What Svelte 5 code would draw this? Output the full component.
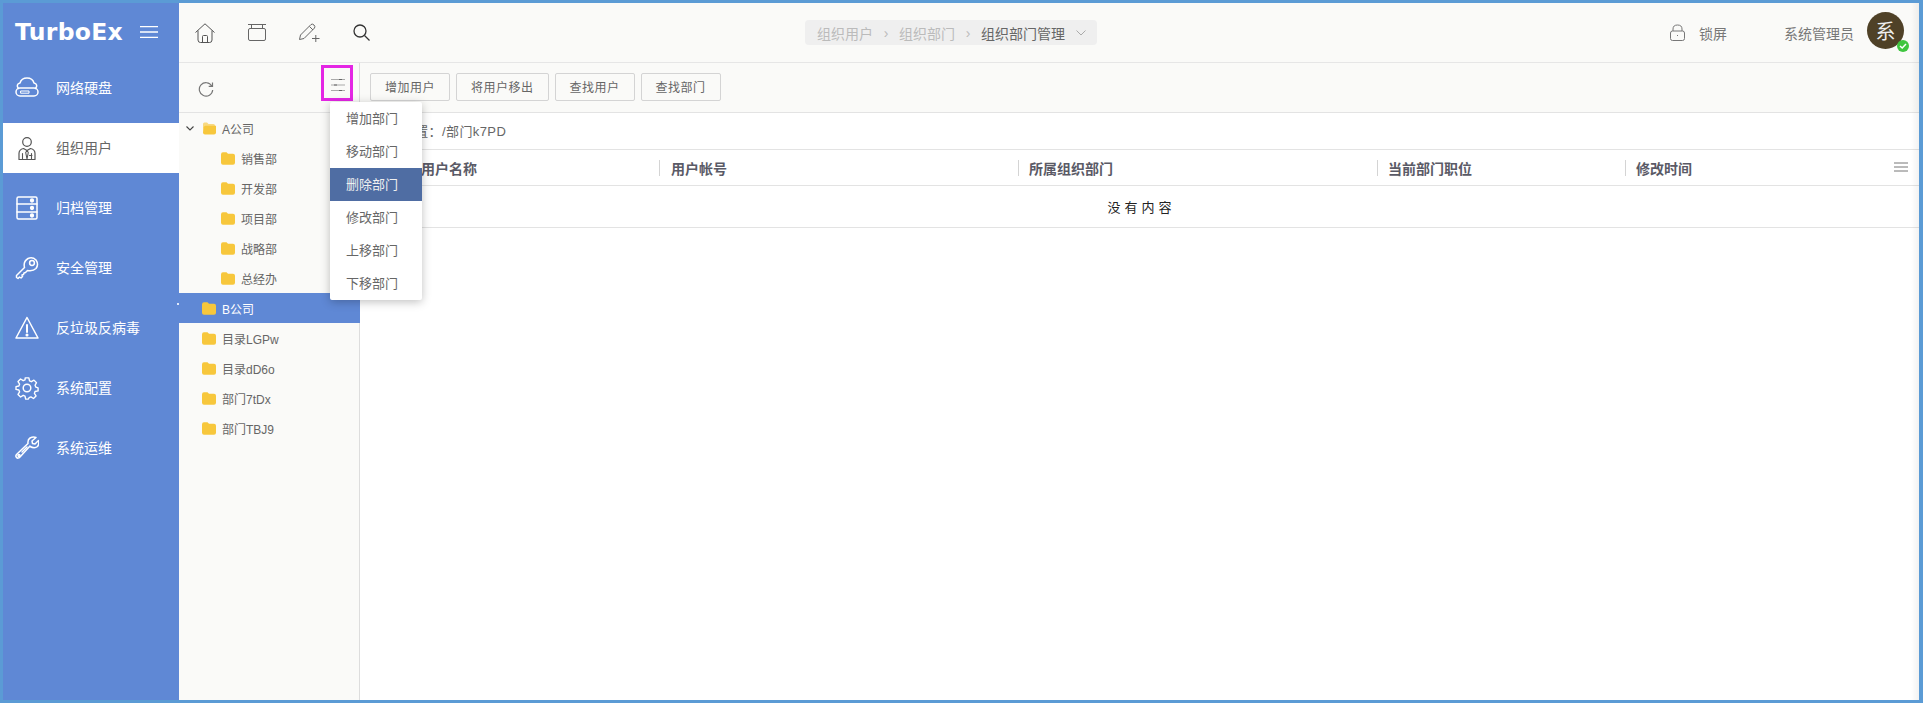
<script lang="ts">
  const nav = [
    { label: "网络硬盘", icon: "disk" },
    { label: "组织用户", icon: "user", active: true },
    { label: "归档管理", icon: "server" },
    { label: "安全管理", icon: "key" },
    { label: "反垃圾反病毒", icon: "warn" },
    { label: "系统配置", icon: "gear" },
    { label: "系统运维", icon: "wrench" }
  ];
  const subs = ["销售部", "开发部", "项目部", "战略部", "总经办"];
  const tops = [
    { label: "B公司", selected: true },
    { label: "目录LGPw" },
    { label: "目录dD6o" },
    { label: "部门7tDx" },
    { label: "部门TBJ9" }
  ];
  const actions = ["增加部门", "移动部门", "删除部门", "修改部门", "上移部门", "下移部门"];
  const buttons = ["增加用户", "将用户移出", "查找用户", "查找部门"];
  const columns = ["用户名称", "用户帐号", "所属组织部门", "当前部门职位", "修改时间"];
</script>

{#snippet folder(open = false)}
  <svg class="folder" viewBox="0 0 14 13" width="14" height="13">
    {#if open}
      <path d="M1 4V2Q1 .5 2.500 .5h2.500l1.500 1.500h5q1.500 0 1.500 1.500V4H4Q2 4 1.600 5.500L1 8z" fill="#f7cb4d" opacity=".7" />
      <path d="M1.400 5.500Q1.800 3.800 3.600 3.800H14V10.500q0 2-2 2H3q-2 0-2-2z" fill="#f7c73c" />
    {:else}
      <path d="M0 2.500Q0 .3 2 .3h3.500l1.500 1.500H12q2 0 2 2v7q0 2-2 2H2q-2 0-2-2z" fill="#f7c73c" />
    {/if}
  </svg>
{/snippet}

{#snippet navIcon(name: string)}
  <svg viewBox="0 0 24 24" width="24" height="24" fill="none" stroke="currentColor" stroke-width="1.500" stroke-linecap="round" stroke-linejoin="round">
    {#if name === "disk"}
      <path d="M3.500 12.500C1.500 10.500 2 7.500 5 7 6 3.500 9 2 12 2s6 1.500 7 5c3 .5 3.500 3.500 1.500 5.500" />
      <rect x="1" y="12" width="22" height="8" rx="4" />
      <rect x="6" y="15" width="8" height="2.200" stroke-width="1" />
    {:else if name === "user"}
      <circle cx="12" cy="6" r="4.300" stroke-width="1.200" />
      <path d="M4 23.500v-6q0-4 4.500-5l3.500 2 3.500-2q4.500 1 4.500 5v6z" stroke-width="1.200" />
      <path d="M12 14.500l-1.300 2 1.300 6.500 1.300-6.500zM7.500 17.500v6M16.500 17.500v6M14.500 19.500h2.500" stroke-width="1.100" />
    {:else if name === "server"}
      <rect x="2" y="1" width="20" height="22" rx="1.500" />
      <path d="M2 8h20M2 16h20" />
      <circle cx="17" cy="4.500" r="1.400" fill="currentColor" />
      <circle cx="17" cy="12" r="1.400" fill="currentColor" />
      <circle cx="17" cy="19.500" r="1.400" fill="currentColor" />
    {:else if name === "key"}
      <path d="M9.500 11.500L1.500 19.500v2l1.500 1 1.500-1.500 1.500 1 1.500-1.500-.5-1.500 1.500-.5.500-1.500 1.500-.5 2-2Q18 15.500 21 12.500 24 8.500 21 4 17.500.500 13 2.500 8 5.500 9.500 11.500z" />
      <circle cx="17" cy="7" r="2.400" />
    {:else if name === "warn"}
      <path d="M12 1.500L1 22h22z" />
      <path d="M12 9v7" stroke-width="2" />
      <circle cx="12" cy="19" r=".8" fill="currentColor" />
    {:else if name === "gear"}
      <path d="M10 1h4l.7 3.200 2 .9L19.500 3.400 22.300 6.200 20.700 9l.9 2 2.400.9v3.200l-3.300.7-.7 2 1.800 2.800-2.800 2.800-2.800-1.700-2 .8L13.500 24h-3L9.800 20.700l-2-.8L5 21.700 2.200 18.900 3.900 16.100l-.8-2L0 13.500v-3l3.100-.7.800-2L2.200 5 5 2.200 7.800 4l2-.9z" transform="translate(1 1) scale(.92)" />
      <circle cx="12" cy="12" r="3.800" />
    {:else}
      <path d="M15 10L5 21q-2 2-3.500.5T2 18L13 7.500Q12.500 3.500 15 2q3-1.500 6-.5l-4 3.500.5 2.500 2.500.5 3.500-3.500q1 3.500-1 6-3 2.500-7.500 0z" />
      <circle cx="4" cy="19.500" r="1" />
      <path d="M7 16l5-5" />
    {/if}
  </svg>
{/snippet}

<div class="frame">
  <aside class="sidebar">
    <div class="brand">
      <span class="logo">TurboEx</span>
      <svg viewBox="0 0 18 12" width="18" height="12" stroke="#fff" stroke-width="1.300"><path d="M0 .7h18M0 6h18M0 11.300h18" /></svg>
    </div>
    <nav>
      {#each nav as item}
        <div class="nav-item" class:active={item.active}>
          {@render navIcon(item.icon)}
          <span>{item.label}</span>
        </div>
      {/each}
    </nav>
  </aside>

  <div class="main">
    <header class="topbar">
      <div class="quick">
        <svg viewBox="0 0 20 20" width="20" height="20" fill="none" stroke="#555" stroke-width="1"><path d="M.5 9.500L10 .8l9.500 8.700M3 7.500V17q0 2.500 2.500 2.500h9Q17 19.500 17 17V7.500M7.500 19.500v-6q0-1 1-1h3q1 0 1 1v6" /></svg>
        <svg viewBox="0 0 18 17" width="18" height="17" fill="none" stroke="#666" stroke-width="1"><path d="M0 .5h18M3.500.5v4M14.500.5v4" /><rect x=".5" y="4.500" width="17" height="12" rx="1.500" /></svg>
        <svg viewBox="0 0 21 19" width="21" height="19" fill="none" stroke="#666" stroke-width="1"><path d="M.5 16.500l1-4.500L12 1.500q1.500-1 3 .5t.5 3L5 15.500zM10.500 3.500l3.500 3.500M13 15.500h7.500M16.800 12v7" /></svg>
        <svg viewBox="0 0 17 17" width="17" height="17" fill="none" stroke="#333" stroke-width="1.300"><circle cx="7" cy="7" r="6" /><path d="M11.500 11.500L16.500 16.500" /></svg>
      </div>
      <div class="crumbs">
        <span class="dim">组织用户</span><i>›</i><span class="dim">组织部门</span><i>›</i><span>组织部门管理</span>
        <svg viewBox="0 0 10 6" width="10" height="6" fill="none" stroke="#aaa"><path d="M.5.500L5 5 9.500.500" /></svg>
      </div>
      <div class="account">
        <svg viewBox="0 0 15 17" width="15" height="17" fill="none" stroke="#777"><path d="M3 7V5q0-4 4.500-4T12 5v2" /><rect x=".5" y="7" width="14" height="9.500" rx="2" /><path d="M7 11.500h1" /></svg>
        <span class="lock">锁屏</span>
        <span class="who">系统管理员</span>
        <div class="avatar">系
          <span class="badge"><svg viewBox="0 0 10 10" width="10" height="10" fill="none" stroke="#fff" stroke-width="1.500"><path d="M2 5l2.200 2L8 3" /></svg></span>
        </div>
      </div>
    </header>

    <div class="workspace">
      <section class="tree">
        <div class="tree-tools">
          <svg viewBox="0 0 16 16" width="16" height="16" fill="none" stroke="#777" stroke-width="1.200"><path d="M13.800 5A6.700 6.700 0 1 0 14.700 9M14.500 1.500V5.300H10.700" /></svg>
          <svg class="sliders" viewBox="0 0 14 12" width="14" height="12" fill="none" stroke="#aaa"><path d="M0 .5h14M0 6h14M0 11.500h14" /><path d="M8 .5h3M3 6h3M8 11.500h3" stroke="#666" /></svg>
        </div>
        <div class="tree-row top">
          <svg class="caret" viewBox="0 0 8 5" width="8" height="5" fill="none" stroke="#444" stroke-width="1.100"><path d="M.5.500L4 4 7.500.500" /></svg>
          {@render folder(true)}
          <span>A公司</span>
        </div>
        {#each subs as name}
          <div class="tree-row sub">{@render folder()}<span>{name}</span></div>
        {/each}
        {#each tops as t}
          <div class="tree-row top" class:selected={t.selected}>{@render folder()}<span>{t.label}</span></div>
        {/each}
      </section>

      <section class="content">
        <div class="toolbar">
          {#each buttons as b}<button>{b}</button>{/each}
        </div>
        <div class="path">当前位置：/部门k7PD</div>
        <div class="thead">
          {#each columns as c}<div class="th"><b>{c}</b></div>{/each}
          <svg viewBox="0 0 14 10" width="14" height="10" stroke="#777"><path d="M0 1h14M0 5h14M0 9h14" /></svg>
        </div>
        <div class="empty">没有内容</div>
      </section>
    </div>
    <div class="edge"></div>
  </div>

  <div class="highlight"></div>
  <ul class="menu">
    {#each actions as a, i}<li class:hot={i === 2}>{a}</li>{/each}
  </ul>
</div>

<style>
  :global(body) { background: #fff; }
  .frame {
    position: relative;
    box-sizing: border-box;
    width: 1923px; height: 703px;
    display: flex;
    border: solid #5b9bd5;
    border-width: 3px 4px 3px 3px;
    font-family: "Liberation Sans", "Noto Sans CJK SC", sans-serif;
    font-size: 13px;
    color: #555;
    overflow: hidden;
  }
  .sidebar { width: 176px; flex-shrink: 0; background: #5f88d5; color: #fff; }
  .brand { height: 60px; box-sizing: border-box; padding: 0 0 3px 12px; display: flex; align-items: center; gap: 17px; }
  .logo { font: 700 23.500px "DejaVu Sans", sans-serif; letter-spacing: .3px; }
  .nav-item { height: 50px; margin-bottom: 10px; display: flex; align-items: center; gap: 17px; padding-left: 12px; font-size: 14px; }
  .nav-item svg { margin-top: -1px; }
  .nav-item span { margin-top: -2px; }
  .nav-item.active { background: #fff; color: #666; }
  .nav-item.active svg { color: #555; }

  .main { flex: 1; display: flex; flex-direction: column; min-width: 0; position: relative; }
  .edge { position: absolute; right: 0; top: 0; bottom: 0; width: 8px; background: linear-gradient(to right, transparent, rgba(0,0,0,.05)); pointer-events: none; }
  .topbar {
    height: 60px; box-sizing: border-box; flex-shrink: 0; display: flex; align-items: center;
    background: #fafaf8; border-bottom: 1px solid #e6e6e6;
    position: relative; padding: 0 15px 0 16px;
  }
  .quick { display: flex; align-items: center; gap: 33px; }
  .crumbs {
    position: absolute; left: 626px; top: 17px;
    height: 25px; width: 292px; box-sizing: border-box; border-radius: 4px;
    display: flex; align-items: center; padding: 0 0 0 12px; background: #efefef;
    color: #666; font-size: 14px; white-space: nowrap;
  }
  .crumbs .dim { color: #bbb; }
  .crumbs i { font-style: normal; color: #bbb; width: 26px; text-align: center; }
  .crumbs svg { margin-left: 11px; }
  .account { margin-left: auto; display: flex; align-items: center; }
  .lock { margin-left: 14px; font-size: 14px; color: #777; }
  .who { margin-left: 57px; font-size: 14px; color: #777; }
  .avatar {
    position: relative; width: 37px; height: 37px; margin-left: 13px; margin-top: -4px; border-radius: 50%;
    background: #4f4127; color: #eee; font-size: 20px;
    display: flex; align-items: center; justify-content: center;
  }
  .badge {
    position: absolute; right: -5px; bottom: -3px; width: 12px; height: 12px; border-radius: 50%;
    background: #3fc63f; display: flex; align-items: center; justify-content: center;
  }

  .workspace { flex: 1; display: flex; min-height: 0; }
  .tree { width: 181px; flex-shrink: 0; box-sizing: border-box; background: #fafaf8; border-right: 1px solid #ddd; color: #666; font-size: 12px; }
  .tree-tools {
    height: 50px; box-sizing: border-box; border-bottom: 1px solid #e3e3e3;
    display: flex; align-items: center; justify-content: space-between; padding: 0 14px 0 19px;
  }
  .tree-tools > svg:first-child { margin-top: 2px; }
  .sliders { margin-top: -6px; }
  .tree-row { height: 30px; display: flex; align-items: center; gap: 6px; }
  .tree-row.top { padding-left: 23px; }
  .tree-row .caret { margin-left: -16px; margin-right: 2px; }
  .tree-row.sub { padding-left: 42px; }
  .tree-row.selected { background: #5f88d5; color: #fff; margin-right: -1px; position: relative; }
  .tree-row.selected::before { content: ""; position: absolute; left: -2px; top: 10px; width: 2px; height: 2px; background: #dfe8fa; }

  .content { flex: 1; min-width: 0; background: #fff; }
  .toolbar {
    height: 50px; box-sizing: border-box; display: flex; align-items: center; gap: 6px;
    padding: 0 0 0 10px; background: #fafaf8; border-bottom: 1px solid #e3e3e3;
  }
  button {
    height: 28px; padding: 0 14px 2px; margin-top: -1px; background: #fafaf8; border: 1px solid #d4d4d4; border-radius: 2px;
    font: inherit; font-size: 12px; letter-spacing: .5px; color: #666;
  }
  .path { height: 34px; padding: 0 0 2px 15px; display: flex; align-items: center; border-bottom: 1px solid #e3e3e3; font-size: 13px; letter-spacing: .4px; color: #666; }
  .thead { height: 35px; display: flex; align-items: center; border-bottom: 1px solid #e3e3e3; position: relative; }
  .th { flex-shrink: 0; box-sizing: border-box; position: relative; }
  .th:nth-child(1) { width: 299px; padding-left: 61px; }
  .th:nth-child(2) { width: 359px; padding-left: 12px; }
  .th:nth-child(3) { width: 359px; padding-left: 11px; }
  .th:nth-child(4) { width: 248px; padding-left: 11px; }
  .th:nth-child(5) { width: 260px; padding-left: 11px; }
  .th:not(:first-child)::before { content: ""; position: absolute; left: 0; top: 2px; bottom: 2px; width: 1px; background: #d4d4d4; }
  .th b { font-weight: 700; font-size: 14px; color: #5a5a66; }
  .thead svg { position: absolute; right: 11px; top: 12px; }
  .empty { height: 41px; padding-left: 4px; display: flex; align-items: center; justify-content: center; border-bottom: 1px solid #e3e3e3; letter-spacing: 4px; font-size: 13px; color: #222; }

  .highlight { position: absolute; left: 318px; top: 62px; width: 32px; height: 36px; box-sizing: border-box; border: 3px solid #e426e4; }
  .menu {
    position: absolute; left: 327px; top: 99px; width: 92px; margin: 0; padding: 0; list-style: none;
    background: #fff; border-radius: 2px; box-shadow: 0 2px 10px rgba(0,0,0,.25);
  }
  .menu li { height: 33px; box-sizing: border-box; display: flex; align-items: center; padding: 0 0 2px 16px; font-size: 13px; color: #666; }
  .menu li.hot { background: #4f6da3; color: #f0f0f0; }
</style>
